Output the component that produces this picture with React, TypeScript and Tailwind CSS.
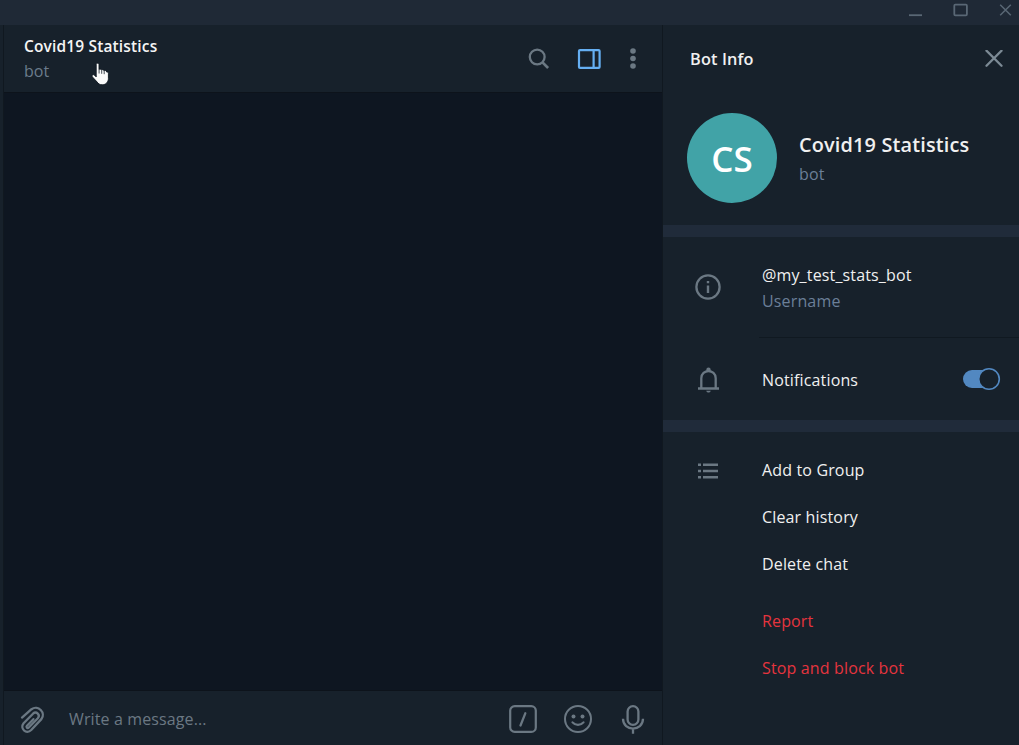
import React from "react";

const actions = [
  { label: "Add to Group", row: "h-[47px]", color: "text-[#f0f0f0]" },
  { label: "Clear history", row: "h-[47px]", color: "text-[#f0f0f0]" },
  { label: "Delete chat", row: "h-[47px]", color: "text-[#f0f0f0]" },
  { label: "Report", row: "mt-[10px] h-[47px]", color: "text-[#e5343e]" },
  { label: "Stop and block bot", row: "h-[47px]", color: "text-[#e5343e]" },
];

function TitleBar() {
  return (
    <div className="flex h-[25px] shrink-0 justify-end bg-[#1f2936] text-[#596775]">
      <svg width="119" height="25" fill="none" stroke="currentColor">
        <path d="M9 15.2h13" strokeWidth="1.8" />
        <rect x="54.3" y="4.7" width="12.6" height="10.6" rx="1" strokeWidth="1.8" />
        <path d="M100.2 4.7l10.6 10.6M110.8 4.7l-10.6 10.6" strokeWidth="1.5" />
      </svg>
    </div>
  );
}

function ChatHeader() {
  return (
    <header className="relative flex h-[68px] shrink-0 justify-between border-b border-[#0d131b] bg-[#17212b] pl-5">
      <div className="flex flex-col pt-[10px]">
        <h1 className="text-[15.5px] leading-[22px] font-semibold tracking-[0.15px] text-[#f5f5f5]">Covid19 Statistics</h1>
        <p className="mt-[3px] text-base leading-[22px] text-[#6b7c8c]">bot</p>
      </div>
      <div className="flex pt-[21px] text-[#6b7883]">
        <svg width="26" height="26" viewBox="0 0 26 26" fill="none" stroke="currentColor" strokeWidth="2.3">
          <circle cx="11.2" cy="11" r="7.4" />
          <path d="M16.5 16.4l5.6 5.6" strokeWidth="2.7" />
        </svg>
        <svg className="ml-[24px]" width="26" height="26" viewBox="0 0 26 26" fill="none" stroke="#65aff2" strokeWidth="2.2">
          <rect x="3" y="4.1" width="20.6" height="17.8" rx="1" />
          <path d="M17.600 4v18" />
        </svg>
        <svg className="mr-[16px] ml-[18px]" width="26" height="26" viewBox="0 0 26 26" fill="currentColor">
          <circle cx="13" cy="5" r="2.8" />
          <circle cx="13" cy="12.5" r="2.8" />
          <circle cx="13" cy="20" r="2.8" />
        </svg>
      </div>
      <svg className="absolute top-[37px] left-[87px]" width="20" height="25" viewBox="0 0 20 25">
        <path
          d="M5.2 2.6c0-1.9 2.8-1.9 2.8 0v5c.6-.8 2.1-.6 2.5.4.8-.7 2.1-.3 2.4.6 1.2-.6 2.7.1 2.7 1.4 1-.2 1.8.4 1.8 1.4v5.2c0 3.5-2.5 6.2-6.2 6.2-2.7 0-4-1.2-5-2.7L1.3 14.8c-1-1.6.8-2.8 2-1.8l1.9 1.9z"
          fill="#fafafa"
          stroke="#0f1720"
          strokeWidth=".9"
        />
        <path d="M8.1 7.5v4M10.7 8.2v3.6M13.2 9v3.2" stroke="#17212b" strokeWidth=".8" />
      </svg>
    </header>
  );
}

function Composer() {
  return (
    <footer className="flex h-[55px] shrink-0 border-t border-[#0d131b] bg-[#17212b] pt-[13px] text-[#6b7883]">
      <svg className="ml-[14px]" width="30" height="32" viewBox="0 0 30 32" fill="none" stroke="currentColor" strokeWidth="2.3" strokeLinecap="round" strokeLinejoin="round">
        <path d="M4 13.6L13.5 5.2c6.6-4.7 14.7 3.7 9.9 9.9L13.200 26C8.3 31 1.5 24.5 5.6 19.3L15 9.7c3.4-3 7.7 1.4 4.8 4.6l-9 9.2c-1.5 1.3-3-.2-1.8-1.7l6.4-6.6" />
      </svg>
      <p className="ml-[21px] pt-[4px] text-base leading-[22px] tracking-[0.12px] text-[#6b7883]">Write a message...</p>
      <div className="mr-[14px] ml-auto flex gap-[25px]">
        <svg width="30" height="30" viewBox="0 0 30 30" fill="none" stroke="currentColor" strokeWidth="2.2">
          <rect x="2.2" y="2.1" width="25.6" height="25.8" rx="4.5" />
          <path d="M17.3 9.300l-4.800 12.2" strokeWidth="2.3" strokeLinecap="round" />
        </svg>
        <svg width="30" height="30" viewBox="0 0 30 30" fill="none" stroke="currentColor" strokeWidth="2">
          <circle cx="15" cy="15" r="13" />
          <circle cx="10.5" cy="12.500" r="2" fill="currentColor" stroke="none" />
          <circle cx="19.5" cy="12.500" r="2" fill="currentColor" stroke="none" />
          <path d="M9.5 18.4c2.900 3.4 8.1 3.4 11 0" strokeWidth="2.2" strokeLinecap="round" />
        </svg>
        <svg width="30" height="30" viewBox="0 0 30 30" fill="none" stroke="currentColor" strokeWidth="2.3">
          <rect x="9.600" y="2.2" width="10.8" height="18.6" rx="5.4" />
          <path d="M5 14.8c0 13 20 13 20 0M15 25v4.8" />
        </svg>
      </div>
    </footer>
  );
}

function BotInfo() {
  return (
    <aside className="flex w-[357px] shrink-0 flex-col border-l border-[#101820] bg-[#17212b] text-base leading-[22px] tracking-[0.15px]">
      <div className="flex h-[68px] items-center justify-between pr-[16px] pl-[27px]">
        <h2 className="text-[16.3px] font-semibold text-[#f0f0f0]">Bot Info</h2>
        <svg width="18" height="18" viewBox="0 0 18 18" stroke="#7c8a95" strokeWidth="2.3" strokeLinecap="round">
          <path d="M1.5 .7l15 15M16.500 .7l-15 15" />
        </svg>
      </div>
      <section className="flex h-[132px] pt-[20px] pl-[24px]">
        <div className="flex size-[90px] items-center justify-center rounded-full bg-[#41a3a7] pt-[2px] text-[35px] font-semibold tracking-normal text-white">CS</div>
        <div className="ml-[22px] flex flex-col pt-[19px]">
          <h3 className="text-[19.9px] leading-[26px] font-semibold text-[#f0f0f0]">Covid19 Statistics</h3>
          <p className="mt-[5px] text-[#6b7f98]">bot</p>
        </div>
      </section>
      <div className="h-[12px] shrink-0 bg-[#202b3a]" />
      <section className="flex h-[183px] shrink-0">
        <div className="flex w-[96px] shrink-0 flex-col pl-[31px] text-[#6b7883]">
          <svg className="mt-[36px]" width="28" height="28" viewBox="0 0 28 28" fill="none" stroke="currentColor" strokeWidth="2.3">
            <circle cx="14" cy="14" r="11.6" />
            <path d="M14 12.500v7.5M14 8v2.3" strokeWidth="2.4" />
          </svg>
          <svg className="mt-[65px]" width="28" height="28" viewBox="0 0 28 28" fill="none" stroke="currentColor" strokeWidth="2.3">
            <path d="M4 22.500h21M7.300 21.500v-9.200c0-9.600 14.400-9.600 14.400 0v9.200" />
            <path d="M12.300 4.900V3.800a2.200 2.200 0 0 1 4.400 0v1.100zM12.200 24.800h4.600c-.4 2.400-4.200 2.400-4.600 0z" fill="currentColor" stroke="none" />
          </svg>
        </div>
        <div className="flex grow flex-col">
          <div className="flex h-[101px] flex-col border-b border-[#101921] pt-[27px] pl-[3px]">
            <p className="text-[#f0f0f0]">@my_test_stats_bot</p>
            <p className="mt-[4px] text-[#6b7f98]">Username</p>
          </div>
          <div className="flex h-[82px] items-center pr-[18px] pl-[3px]">
            <p className="grow pt-[2px] text-[#f0f0f0]">Notifications</p>
            <svg width="39" height="24" viewBox="0 0 39 24">
              <rect x="1" y="3" width="34" height="18" rx="9" fill="#5288c1" />
              <circle cx="27" cy="12" r="10.3" fill="#17212b" stroke="#5288c1" strokeWidth="1.6" />
            </svg>
          </div>
        </div>
      </section>
      <div className="h-[12px] shrink-0 bg-[#202b3a]" />
      <section className="flex pt-[14px]">
        <div className="w-[99px] pt-[14px] pl-[34px] text-[#6b7883]">
          <svg width="22" height="22" viewBox="0 0 22 22" stroke="currentColor" strokeWidth="2.4">
            <path d="M1 4.700h3M6 4.700h15M1 11h3M6 11h15M1 17.300h3M6 17.300h15" />
          </svg>
        </div>
        <ul className="flex flex-col">
          {actions.map((a) => (
            <li key={a.label} className={a.row + " flex items-center " + a.color}>
              {a.label}
            </li>
          ))}
        </ul>
      </section>
    </aside>
  );
}

export default function App() {
  return (
    <div className="flex h-[745px] w-[1019px] flex-col overflow-hidden bg-[#17212b] font-['Open_Sans',sans-serif]">
      <TitleBar />
      <div className="flex min-h-0 grow">
        <main className="ml-[3px] flex grow flex-col border-l border-[#101820]">
          <ChatHeader />
          <div className="grow bg-[#0e1621]" />
          <Composer />
        </main>
        <BotInfo />
      </div>
    </div>
  );
}
